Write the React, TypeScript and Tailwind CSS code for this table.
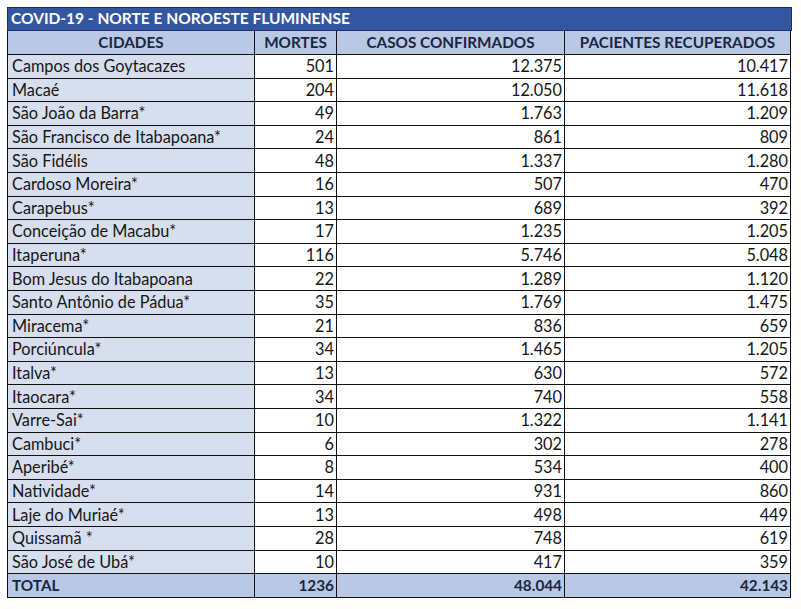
const rows: [string, string, string, string][] = [
  ['Campos dos Goytacazes', '501', '12.375', '10.417'],
  ['Macaé', '204', '12.050', '11.618'],
  ['São João da Barra*', '49', '1.763', '1.209'],
  ['São Francisco de Itabapoana*', '24', '861', '809'],
  ['São Fidélis', '48', '1.337', '1.280'],
  ['Cardoso Moreira*', '16', '507', '470'],
  ['Carapebus*', '13', '689', '392'],
  ['Conceição de Macabu*', '17', '1.235', '1.205'],
  ['Itaperuna*', '116', '5.746', '5.048'],
  ['Bom Jesus do Itabapoana', '22', '1.289', '1.120'],
  ['Santo Antônio de Pádua*', '35', '1.769', '1.475'],
  ['Miracema*', '21', '836', '659'],
  ['Porciúncula*', '34', '1.465', '1.205'],
  ['Italva*', '13', '630', '572'],
  ['Itaocara*', '34', '740', '558'],
  ['Varre-Sai*', '10', '1.322', '1.141'],
  ['Cambuci*', '6', '302', '278'],
  ['Aperibé*', '8', '534', '400'],
  ['Natividade*', '14', '931', '860'],
  ['Laje do Muriaé*', '13', '498', '449'],
  ['Quissamã *', '28', '748', '619'],
  ['São José de Ubá*', '10', '417', '359'],
]

const cell = 'border-[1.5px] border-[#111] h-[23.6px] p-0 leading-none'

export default function App() {
  return (
    <div className="w-[801px] h-[609px] bg-[#fffdfb] pt-[7px] pl-[7px] font-['Lato','Liberation_Sans',sans-serif] text-[16.3px] text-[#161616]">
      <div className="w-[785px] h-[24px] bg-[#3356a0] border-[1.5px] border-[#1d2f5c] flex items-center pl-[3px] text-white font-bold text-[15.5px]">
        COVID-19 - NORTE E NOROESTE FLUMINENSE
      </div>
      <table className="border-collapse table-fixed w-[783px]">
        <colgroup>
          <col className="w-[247px]" />
          <col className="w-[82px]" />
          <col className="w-[228px]" />
          <col className="w-[226px]" />
        </colgroup>
        <thead>
          <tr className="bg-[#b8c8e5] font-bold text-[#1b2640] text-[15.3px]">
            <th className={`${cell} text-center border-t-0`}>CIDADES</th>
            <th className={`${cell} text-center border-t-0`}>MORTES</th>
            <th className={`${cell} text-center border-t-0`}>CASOS CONFIRMADOS</th>
            <th className={`${cell} text-center border-t-0`}>PACIENTES RECUPERADOS</th>
          </tr>
        </thead>
        <tbody>
          {rows.map(([city, mortes, casos, rec]) => (
            <tr key={city}>
              <td className={`${cell} bg-[#d7deee] pl-[4px] text-left`}>{city}</td>
              <td className={`${cell} bg-white pr-[2px] text-right`}>{mortes}</td>
              <td className={`${cell} bg-white pr-[2px] text-right`}>{casos}</td>
              <td className={`${cell} bg-white pr-[2px] text-right`}>{rec}</td>
            </tr>
          ))}
          <tr className="bg-[#b8c8e5] font-bold text-[#1b2640] text-[15.3px]">
            <td className={`${cell} pl-[4px] text-left`}>TOTAL</td>
            <td className={`${cell} pr-[2px] text-right`}>1236</td>
            <td className={`${cell} pr-[2px] text-right`}>48.044</td>
            <td className={`${cell} pr-[2px] text-right`}>42.143</td>
          </tr>
        </tbody>
      </table>
    </div>
  )
}
